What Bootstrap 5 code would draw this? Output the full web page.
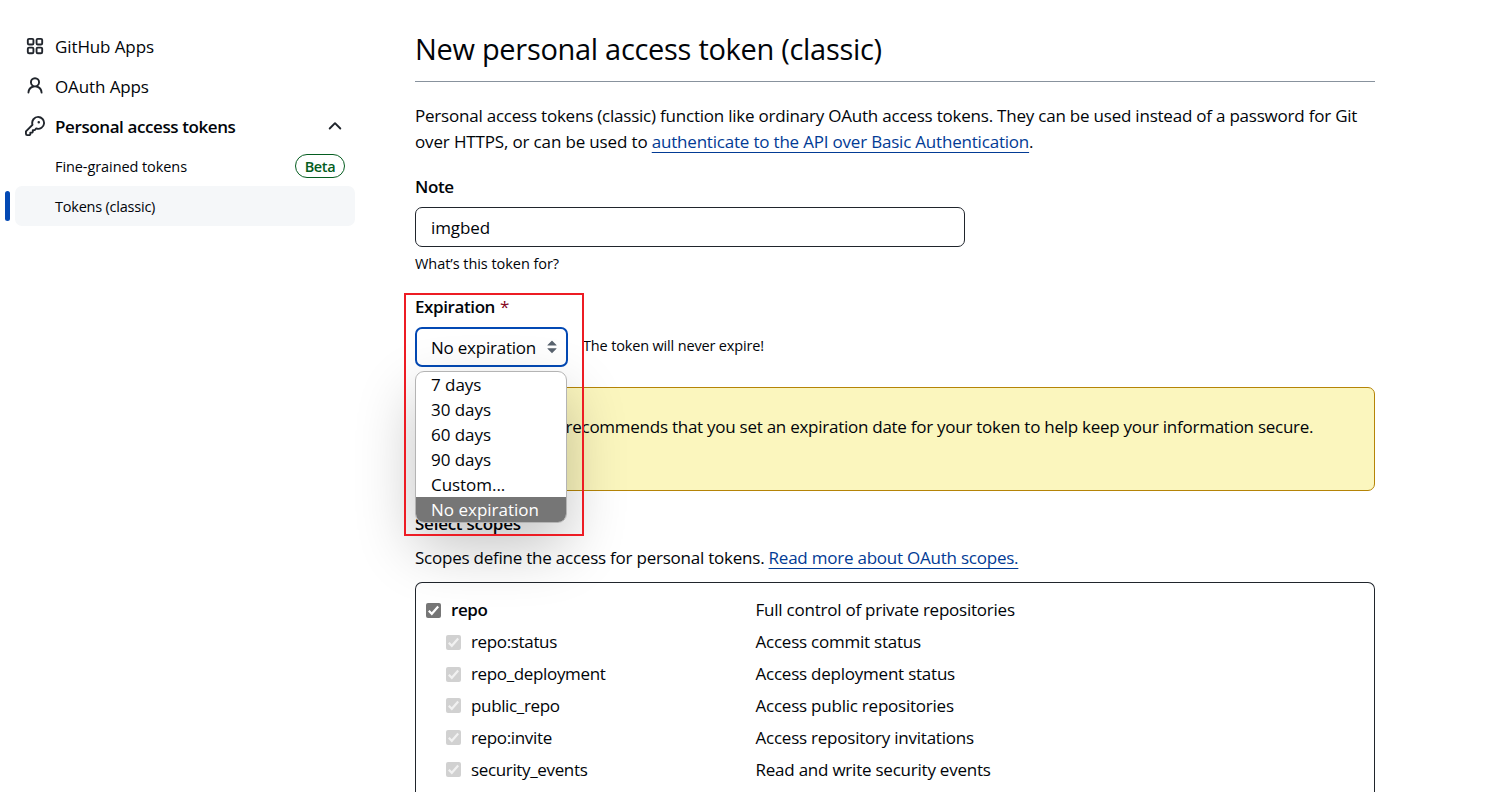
<!DOCTYPE html>
<html lang="en">
<head>
<meta charset="utf-8">
<meta name="viewport" content="width=device-width, initial-scale=1">
<title>New personal access token (classic)</title>
<link href="https://cdn.jsdelivr.net/npm/bootstrap@5.3.0/dist/css/bootstrap.min.css" rel="stylesheet">
<style>
body{font-family:"Open Sans","Noto Sans",sans-serif;font-size:17px;line-height:26px;letter-spacing:-.23px;color:#010409;background:#fff;height:792px;overflow:hidden}
.side{width:415px;padding:26px 60px 0 15px;letter-spacing:-.11px}
.side-row{height:40px;padding:0 10px;color:inherit;text-decoration:none}
.side-row svg{width:20px;height:20px;flex:none}
.side-row .lead-icon{margin-right:10px}
.side-text{padding-top:2px}
.side-sub{padding-left:40px;font-size:14.5px;letter-spacing:-.08px}
.side-current{background:#f5f7f9;border-radius:7px;position:relative;letter-spacing:-.22px}
.side-current::before{content:"";position:absolute;left:-10px;top:5px;width:5px;height:30px;border-radius:3px;background:#0349b4}
.beta{height:24px;width:50px;border:1px solid #055d20;color:#055d20;font-size:14.5px;font-weight:600;border-radius:12px;letter-spacing:-.35px;padding-top:1px}
.main-col{width:960px;padding-top:26px}
.page-title{font-size:29px;line-height:45px;letter-spacing:-.3px;font-weight:400;height:56px;border-bottom:1px solid #88929d;margin:0 0 21px}
.intro{height:53px;margin:0 0 18px;letter-spacing:-.217px}
.intro-end{letter-spacing:-.15px}
.intro-end a.txt{letter-spacing:-.2px}
a.txt{color:#023b95;text-decoration:underline;text-decoration-thickness:1px;text-underline-offset:4px}
.lbl{font-weight:600;letter-spacing:-.4px}
.star{color:#86061d;font-weight:400;margin-left:1px}
.note-box{width:550px;height:40px;border:1px solid #20252c;border-radius:7px;padding:0 15px;font-size:17px;margin-top:7px;letter-spacing:-.1px;color:inherit}
.hint{font-size:14.5px;letter-spacing:-.05px}
.exp-label{margin-top:17px}
.exp-row{margin-top:7px}
.exp-note{margin-left:15px;letter-spacing:-.16px;padding-bottom:2px}
.exp-select{width:153px;height:40px;border:2px solid #0349b4;border-radius:7px;background:#fff;padding:0 4px 0 14px;letter-spacing:inherit;color:inherit}
.exp-select span{padding-top:2px}
.exp-menu{position:absolute;left:0;top:44px;width:152px;height:152px;border:1px solid #b4b4b4;border-radius:9px;background:#fff;overflow:hidden;z-index:5}
.exp-shade{position:absolute;left:0;top:44px;width:152px;height:152px;border-radius:9px;z-index:4;box-shadow:0 24px 60px rgba(0,0,0,.24)}
.exp-menu div{height:25px;line-height:25px;padding-left:15px;white-space:nowrap;letter-spacing:-.05px}
.exp-menu .on{background:#767676;color:#fff;letter-spacing:0}
.marker-frame{position:absolute;left:-11px;top:-34px;width:180px;height:243px;border:2px solid #ed1c24;z-index:6;pointer-events:none}
.warn{height:104px;margin-top:20px;padding:26px 25px 0;background:#fbf6be;border:1px solid #b58407;border-radius:7px;letter-spacing:-.26px}
.scopes-label{margin-top:20px;letter-spacing:-.25px}
.scopes-intro{margin-top:8px}
.scopes{height:210px;margin-top:11px;border:1px solid #20252c;border-bottom:0;border-radius:7px 7px 0 0;padding:11.4px 9px}
.scope{height:31.85px}
.scope-name,.scope-child{width:330.5px;letter-spacing:-.35px}
.scope-name{padding-left:1px}
.scope-child{padding-left:21px}
.tick{width:15px;height:15px;margin-right:10px;flex:none;fill:none;stroke:#f1f1f1;stroke-width:2.2}
.tick rect{fill:#d1d1d1;stroke:none}
.scope-name .tick{stroke:#fff}
.scope-name .tick rect{fill:#767676}
</style>
</head>
<body>
<div class="d-flex">
  <nav class="side flex-shrink-0">
    <a class="side-row d-flex align-items-center" href="#"><svg class="lead-icon" viewBox="0 0 16 16" fill="none" stroke="#20252c" stroke-width="1.5"><rect x="2.25" y="2.25" width="4.5" height="4.5" rx="1"/><rect x="9.25" y="2.25" width="4.5" height="4.5" rx="1"/><rect x="2.25" y="9.25" width="4.5" height="4.5" rx="1"/><rect x="9.25" y="9.25" width="4.5" height="4.5" rx="1"/></svg><span class="side-text">GitHub Apps</span></a>
    <a class="side-row d-flex align-items-center" href="#"><svg class="lead-icon" viewBox="0 0 16 16" fill="#20252c"><path d="M10.561 8.073a6.005 6.005 0 0 1 3.432 5.142.75.75 0 1 1-1.498.07 4.5 4.5 0 0 0-8.99 0 .75.75 0 0 1-1.498-.07 6.004 6.004 0 0 1 3.431-5.142 3.999 3.999 0 1 1 5.123 0ZM10.5 5a2.5 2.5 0 1 0-5 0 2.5 2.5 0 0 0 5 0Z"/></svg><span class="side-text">OAuth Apps</span></a>
    <a class="side-row d-flex align-items-center" href="#"><svg class="lead-icon" viewBox="0 0 16 16" fill="#20252c"><path d="M10.5 0a5.499 5.499 0 1 1-1.288 10.848l-.932.932a.749.749 0 0 1-.53.22H7v.75a.749.749 0 0 1-.22.53l-.5.5a.749.749 0 0 1-.53.22H5v.75a.749.749 0 0 1-.22.53l-.5.5a.749.749 0 0 1-.53.22h-2A1.75 1.75 0 0 1 0 14.25v-2c0-.199.079-.389.22-.53l4.932-4.932A5.5 5.5 0 0 1 10.5 0Zm-4 5.5c-.001.431.069.86.205 1.269a.75.75 0 0 1-.181.768L1.5 12.56v1.69c0 .138.112.25.25.25h1.69l.06-.06v-1.19a.75.75 0 0 1 .75-.75h1.19l.06-.06v-1.19a.75.75 0 0 1 .75-.75h1.19l1.023-1.025a.75.75 0 0 1 .768-.18A4 4 0 1 0 6.5 5.5ZM11 6a1 1 0 1 1 0-2 1 1 0 0 1 0 2Z"/></svg><span class="side-text lbl">Personal access tokens</span><svg class="ms-auto" viewBox="0 0 16 16" fill="#20252c"><path d="M3.22 10.53a.749.749 0 0 1 0-1.06l4.25-4.25a.749.749 0 0 1 1.06 0l4.25 4.25a.749.749 0 1 1-1.06 1.06L8 6.811 4.28 10.53a.749.749 0 0 1-1.06 0Z"/></svg></a>
    <a class="side-row side-sub d-flex align-items-center" href="#"><span class="side-text">Fine-grained tokens</span><span class="beta ms-auto d-flex align-items-center justify-content-center">Beta</span></a>
    <a class="side-row side-sub side-current d-flex align-items-center" href="#"><span class="side-text">Tokens (classic)</span></a>
  </nav>
  <main class="main-col flex-shrink-0">
    <h1 class="page-title">New personal access token (classic)</h1>
    <p class="intro">Personal access tokens (classic) function like ordinary OAuth access tokens. They can be used instead of a password for Git<br><span class="intro-end">over HTTPS, or can be used to <a class="txt" href="#">authenticate to the API over Basic Authentication</a>.</span></p>
    <label class="lbl d-block" for="note">Note</label>
    <input id="note" class="note-box d-block" type="text" value="imgbed">
    <div class="hint mt-1">What’s this token for?</div>
    <div class="lbl exp-label">Expiration <span class="star">*</span></div>
    <div class="position-relative d-flex align-items-center exp-row">
      <button class="exp-select d-flex align-items-center justify-content-between text-nowrap" type="button"><span>No expiration</span><svg width="20" height="20" viewBox="0 0 16 16" fill="#59636e"><path d="m4.427 9.427 3.396 3.396a.251.251 0 0 0 .354 0l3.396-3.396A.25.25 0 0 0 11.396 9H4.604a.25.25 0 0 0-.177.427ZM4.423 6.47 7.82 3.072a.25.25 0 0 1 .354 0L11.57 6.47a.25.25 0 0 1-.177.427H4.6a.25.25 0 0 1-.177-.427Z"/></svg></button>
      <span class="hint exp-note">The token will never expire!</span>
      <div class="exp-shade"></div>
      <div class="exp-menu"><div>7 days</div><div>30 days</div><div>60 days</div><div>90 days</div><div>Custom...</div><div class="on">No expiration</div></div>
      <div class="marker-frame"></div>
    </div>
    <div class="warn">GitHub strongly recommends that you set an expiration date for your token to help keep your information secure.</div>
    <div class="lbl scopes-label">Select scopes</div>
    <div class="scopes-intro">Scopes define the access for personal tokens. <a class="txt" href="#">Read more about OAuth scopes.</a></div>
    <div class="scopes">
      <div class="scope d-flex align-items-center"><div class="scope-name d-flex align-items-center"><svg class="tick" viewBox="0 0 15 15"><rect width="15" height="15" rx="2"/><path d="M2.8 7.8 5.8 10.8 12.2 3.6"/></svg><span class="lbl">repo</span></div><span>Full control of private repositories</span></div>
      <div class="scope d-flex align-items-center"><div class="scope-child d-flex align-items-center"><svg class="tick" viewBox="0 0 15 15"><rect width="15" height="15" rx="2"/><path d="M2.8 7.8 5.8 10.8 12.2 3.6"/></svg><span>repo:status</span></div><span>Access commit status</span></div>
      <div class="scope d-flex align-items-center"><div class="scope-child d-flex align-items-center"><svg class="tick" viewBox="0 0 15 15"><rect width="15" height="15" rx="2"/><path d="M2.8 7.8 5.8 10.8 12.2 3.6"/></svg><span>repo_deployment</span></div><span>Access deployment status</span></div>
      <div class="scope d-flex align-items-center"><div class="scope-child d-flex align-items-center"><svg class="tick" viewBox="0 0 15 15"><rect width="15" height="15" rx="2"/><path d="M2.8 7.8 5.8 10.8 12.2 3.6"/></svg><span>public_repo</span></div><span>Access public repositories</span></div>
      <div class="scope d-flex align-items-center"><div class="scope-child d-flex align-items-center"><svg class="tick" viewBox="0 0 15 15"><rect width="15" height="15" rx="2"/><path d="M2.8 7.8 5.8 10.8 12.2 3.6"/></svg><span>repo:invite</span></div><span>Access repository invitations</span></div>
      <div class="scope d-flex align-items-center"><div class="scope-child d-flex align-items-center"><svg class="tick" viewBox="0 0 15 15"><rect width="15" height="15" rx="2"/><path d="M2.8 7.8 5.8 10.8 12.2 3.6"/></svg><span>security_events</span></div><span>Read and write security events</span></div>
    </div>
  </main>
</div>
<script src="https://cdn.jsdelivr.net/npm/bootstrap@5.3.0/dist/js/bootstrap.bundle.min.js"></script>
</body>
</html>
